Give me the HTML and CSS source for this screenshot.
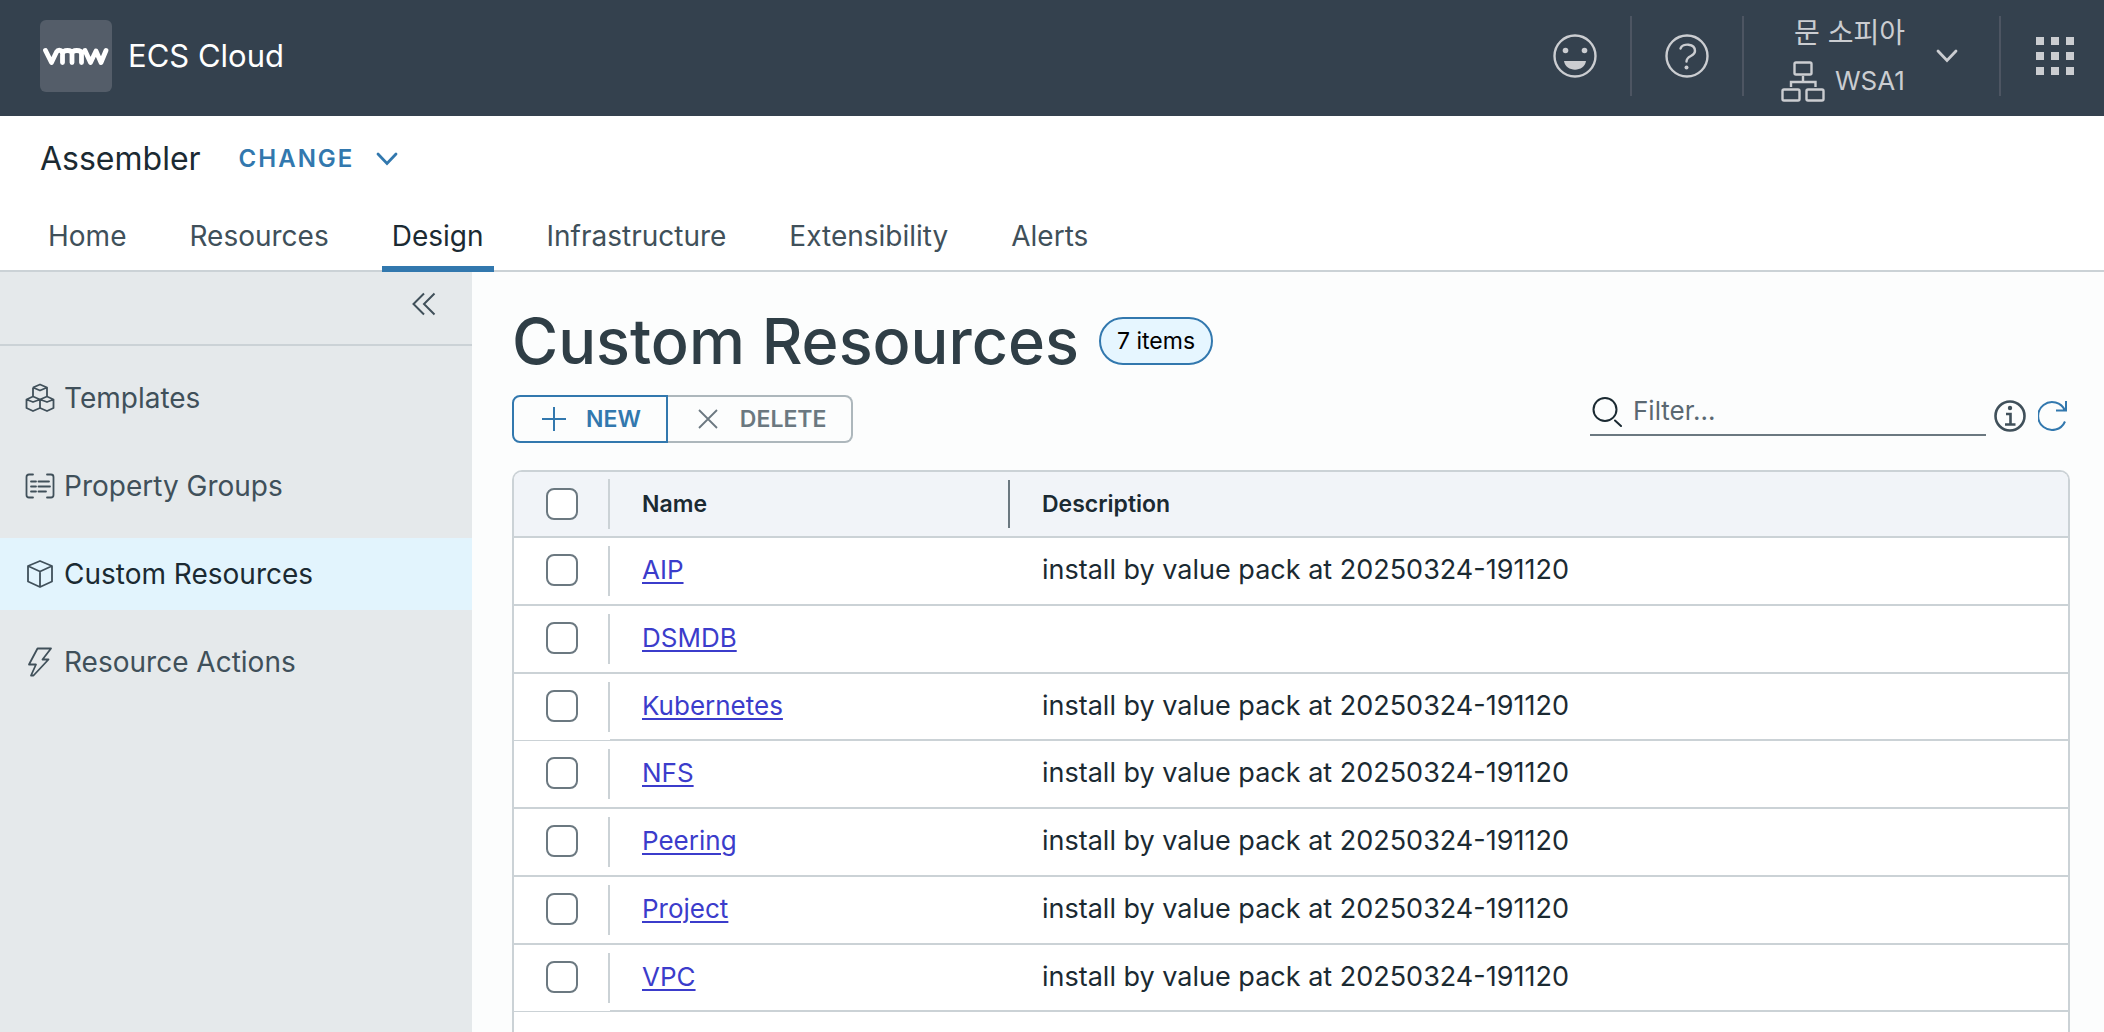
FILE: index.html
```html
<!DOCTYPE html>
<html lang="en">
<head>
<meta charset="utf-8">
<title>Custom Resources</title>
<meta name="viewport" content="width=device-width, initial-scale=1">
<link rel="stylesheet" href="styles.css">
</head>
<body>
<header class="topbar">
  <a class="brand" href="#">
    <span class="brand-logo">
      <svg width="72" height="72" viewBox="0 0 72 72" fill="none" stroke="#fff" stroke-width="4.800" stroke-linecap="round" stroke-linejoin="round" aria-hidden="true">
        <path d="M5.500 30.500 L11.500 42.500 L16.500 32 C18 29.500 22 29.500 22.500 33.500 V42.500 M22.500 33.500 C23.500 29.500 31.500 29.500 32 33.500 V42.500 M32 33.500 C32.500 29.500 41 29.500 41.500 33.500 V42.500 M45 30.500 L50.500 42.500 L56 31 L61 42.500 L66 30.500"/>
      </svg>
    </span>
    <span class="brand-name">ECS Cloud</span>
  </a>
  <div class="topbar-actions">
    <button class="icon-button" type="button" aria-label="Feedback">
      <svg width="44" height="44" viewBox="0 0 44 44" fill="none" stroke="currentColor" stroke-width="2.400" aria-hidden="true">
        <circle cx="22" cy="22" r="20.500"/>
        <circle cx="12.500" cy="16.500" r="2.800" fill="currentColor" stroke="none"/>
        <circle cx="31.500" cy="16.500" r="2.800" fill="currentColor" stroke="none"/>
        <path d="M11 27 H33 C31.500 38.500 12.500 38.500 11 27Z" fill="currentColor" stroke="none"/>
      </svg>
    </button>
    <button class="icon-button" type="button" aria-label="Help">
      <svg width="44" height="44" viewBox="0 0 44 44" fill="none" stroke="currentColor" stroke-width="2.400" stroke-linecap="round" aria-hidden="true">
        <circle cx="22" cy="22" r="20.500"/>
        <path d="M15.500 14.500 C17.500 9 30 9 30 17 C30 23 21.500 21 21.500 27.500"/>
        <circle cx="21.500" cy="33.500" r="2" fill="currentColor" stroke="none"/>
      </svg>
    </button>
    <button class="account" type="button">
      <span class="account-text">
        <span class="account-user" lang="ko">문 소피아</span>
        <span class="account-org">
          <svg width="44" height="44" viewBox="0 0 44 44" fill="none" stroke="currentColor" stroke-width="2.400" aria-hidden="true">
            <rect x="13.500" y="3.500" width="17" height="12" rx="1.500"/>
            <rect x="1.500" y="30.500" width="17" height="11" rx="1.500"/>
            <rect x="25.500" y="30.500" width="17" height="11" rx="1.500"/>
            <path d="M22 17 V23 M10 28 V23 H34.500 V28"/>
          </svg>
          WSA1
        </span>
      </span>
      <svg width="22" height="14" viewBox="0 0 22 14" fill="none" stroke="currentColor" stroke-width="2.800" stroke-linecap="round" aria-hidden="true"><path d="M2 2 L11 11.500 L20 2"/></svg>
    </button>
    <button class="icon-button launcher" type="button" aria-label="Services">
      <svg width="38" height="38" viewBox="0 0 38 38" fill="currentColor" aria-hidden="true">
        <path d="M0 0h8v8H0zM15 0h8v8h-8zM30 0h8v8h-8zM0 15h8v8H0zM15 15h8v8h-8zM30 15h8v8h-8zM0 30h8v8H0zM15 30h8v8h-8zM30 30h8v8h-8z"/>
      </svg>
    </button>
  </div>
</header>

<div class="subheader">
  <div class="service">
    <span class="service-name">Assembler</span>
    <button class="service-change" type="button">CHANGE
      <svg width="22" height="14" viewBox="0 0 22 14" fill="none" stroke="currentColor" stroke-width="2.800" stroke-linecap="round" aria-hidden="true"><path d="M2 2 L11 11.500 L20 2"/></svg>
    </button>
  </div>
  <nav class="tabs" aria-label="Sections">
    <a class="tab" href="#">Home</a>
    <a class="tab" href="#">Resources</a>
    <a class="tab tab-active" href="#" aria-current="page">Design</a>
    <a class="tab" href="#">Infrastructure</a>
    <a class="tab" href="#">Extensibility</a>
    <a class="tab" href="#">Alerts</a>
  </nav>
</div>

<div class="workspace">
  <aside class="sidebar">
    <div class="sidebar-top">
      <button class="collapse" type="button" aria-label="Collapse navigation">
        <svg width="24" height="24" viewBox="0 0 24 24" fill="none" stroke="currentColor" stroke-width="2" aria-hidden="true"><path d="M12 1.500 L1.500 12 L12 22.500 M22.500 1.500 L12 12 L22.500 22.500"/></svg>
      </button>
    </div>
    <nav class="side-nav" aria-label="Design">
      <a class="side-link" href="#">
        <svg width="32" height="32" viewBox="0 0 32 32" fill="none" stroke="currentColor" stroke-width="1.800" stroke-linejoin="round" aria-hidden="true">
          <path d="M9 5.500 L16 2.500 L23 5.500 V15 M9 5.500 V15 M9 5.500 L16 8.500 L23 5.500 M2.500 17.500 L9 14.500 L16 17.500 L23 14.500 L29.500 17.500 V26 L23 29 L16 26 L9 29 L2.500 26 Z M16 17.500 V26 M2.500 17.500 L9 20 L16 17.500 L23 20 L29.500 17.500"/>
        </svg>
        Templates
      </a>
      <a class="side-link" href="#">
        <svg width="32" height="32" viewBox="0 0 32 32" fill="none" stroke="currentColor" stroke-width="1.800" stroke-linecap="round" aria-hidden="true">
          <path d="M9 4.500 H5 Q2.500 4.500 2.500 7 V25 Q2.500 27.500 5 27.500 H9 M23 4.500 H27 Q29.500 4.500 29.500 7 V25 Q29.500 27.500 27 27.500 H23 M7 11.500 H12 M14.500 11.500 H25 M7 16.500 H12 M14.500 16.500 H26 M7 21.500 H12 M14.500 21.500 H22"/>
        </svg>
        Property Groups
      </a>
      <a class="side-link side-link-active" href="#" aria-current="page">
        <svg width="32" height="32" viewBox="0 0 32 32" fill="none" stroke="currentColor" stroke-width="1.800" stroke-linejoin="round" aria-hidden="true">
          <path d="M16 3 L28 8 V23.500 L16 29 L4 23.500 V8 Z M4 8 L16 13.500 L28 8 M16 13.500 V29"/>
        </svg>
        Custom Resources
      </a>
      <a class="side-link" href="#">
        <svg width="32" height="32" viewBox="0 0 32 32" fill="none" stroke="currentColor" stroke-width="1.800" stroke-linejoin="round" aria-hidden="true">
          <path d="M13.500 2.500 H27 L18.500 13.500 H24.500 L9.500 29.500 H7 L12 18.500 H5 Z"/>
        </svg>
        Resource Actions
      </a>
    </nav>
  </aside>

  <main class="content">
    <div class="title-row">
      <h1 class="title">Custom Resources</h1>
      <span class="badge">7 items</span>
    </div>
    <div class="toolbar">
      <div class="button-group">
        <button class="button button-new" type="button">
          <svg width="24" height="24" viewBox="0 0 24 24" fill="none" stroke="currentColor" stroke-width="2" aria-hidden="true"><path d="M12 0 V24 M0 12 H24"/></svg>
          NEW
        </button>
        <button class="button button-delete" type="button" disabled>
          <svg width="20" height="20" viewBox="0 0 20 20" fill="none" stroke="currentColor" stroke-width="1.800" aria-hidden="true"><path d="M1 1 L19 19 M19 1 L1 19"/></svg>
          DELETE
        </button>
      </div>
      <div class="filter-tools">
        <label class="filter">
          <svg width="32" height="32" viewBox="0 0 32 32" fill="none" stroke="currentColor" stroke-width="2" stroke-linecap="round" aria-hidden="true"><circle cx="15" cy="14.500" r="11.500"/><path d="M25 25.500 L31 31"/></svg>
          <input class="filter-input" type="text" placeholder="Filter..." aria-label="Filter">
        </label>
        <button class="tool info" type="button" aria-label="Filter help">
          <svg width="32" height="32" viewBox="0 0 32 32" fill="none" stroke="currentColor" stroke-width="2.600" aria-hidden="true"><circle cx="16" cy="16" r="14.500"/><circle cx="16" cy="8" r="2.200" fill="currentColor" stroke="none"/><path d="M12 14 H16.500 V24.500 M11 24.500 H21.500"/></svg>
        </button>
        <button class="tool refresh" type="button" aria-label="Refresh">
          <svg width="32" height="32" viewBox="0 0 32 32" fill="none" stroke="currentColor" stroke-width="2" aria-hidden="true"><path d="M27 21.500 A14 14 0 1 1 27 10.500 M18 10.500 H28 V1"/></svg>
        </button>
      </div>
    </div>

    <div class="grid">
      <table class="table">
        <thead>
          <tr>
            <th class="cell-select" scope="col"><input class="check" type="checkbox" aria-label="Select all"></th>
            <th class="cell-name" scope="col">Name</th>
            <th class="cell-desc" scope="col">Description</th>
          </tr>
        </thead>
        <tbody>
          <tr><td class="cell-select"><input class="check" type="checkbox" aria-label="Select AIP"></td><td class="cell-name"><a href="#">AIP</a></td><td class="cell-desc">install by value pack at 20250324-191120</td></tr>
          <tr><td class="cell-select"><input class="check" type="checkbox" aria-label="Select DSMDB"></td><td class="cell-name"><a href="#">DSMDB</a></td><td class="cell-desc"></td></tr>
          <tr><td class="cell-select"><input class="check" type="checkbox" aria-label="Select Kubernetes"></td><td class="cell-name"><a href="#">Kubernetes</a></td><td class="cell-desc">install by value pack at 20250324-191120</td></tr>
          <tr><td class="cell-select"><input class="check" type="checkbox" aria-label="Select NFS"></td><td class="cell-name"><a href="#">NFS</a></td><td class="cell-desc">install by value pack at 20250324-191120</td></tr>
          <tr><td class="cell-select"><input class="check" type="checkbox" aria-label="Select Peering"></td><td class="cell-name"><a href="#">Peering</a></td><td class="cell-desc">install by value pack at 20250324-191120</td></tr>
          <tr><td class="cell-select"><input class="check" type="checkbox" aria-label="Select Project"></td><td class="cell-name"><a href="#">Project</a></td><td class="cell-desc">install by value pack at 20250324-191120</td></tr>
          <tr><td class="cell-select"><input class="check" type="checkbox" aria-label="Select VPC"></td><td class="cell-name"><a href="#">VPC</a></td><td class="cell-desc">install by value pack at 20250324-191120</td></tr>
        </tbody>
      </table>
    </div>
  </main>
</div>
</body>
</html>
```
FILE: styles.css
```css
:root {
  --line: #cbd2d6;
  --blue: #3278ae;
  --ink: #1b2a32;
  --text: #40505a;
  --muted: #6b7880;
}

* { box-sizing: border-box; }

body {
  margin: 0;
  height: 100vh;
  display: flex;
  flex-direction: column;
  overflow: hidden;
  background: #fcfdfd;
  color: var(--ink);
  font-family: Inter, "Noto Sans CJK KR", sans-serif;
  font-size: 26px;
  line-height: 36px;
}

a { color: inherit; text-decoration: none; }
svg { display: block; flex: none; }

button {
  margin: 0;
  padding: 0;
  border: 0;
  background: none;
  color: inherit;
  font: inherit;
}

.topbar {
  flex: none;
  height: 116px;
  padding: 0 0 4px 40px;
  display: flex;
  align-items: center;
  justify-content: space-between;
  background: #34414e;
  color: #cbcdd1;
}

.brand { display: flex; align-items: center; gap: 16px; color: #fff; }
.brand-logo { border-radius: 6px; background: #545d69; }
.brand-name { font-size: 31px; }

.topbar-actions { display: flex; height: 80px; }

.icon-button {
  width: 112px;
  display: flex;
  align-items: center;
  justify-content: center;
  border-right: 2px solid #4d5562;
}

.launcher { width: 103px; padding-left: 4px; border-right: 0; }

.account {
  width: 257px;
  padding: 0 41px 0 37px;
  display: flex;
  align-items: center;
  justify-content: space-between;
  border-right: 2px solid #4d5562;
  text-align: right;
}

.account-text { align-self: flex-start; }
.account-user { display: block; font-size: 28px; line-height: 34px; }
.account-org { display: flex; align-items: center; gap: 10px; height: 62px; }

.subheader {
  flex: none;
  background: #fff;
  border-bottom: 2px solid var(--line);
}

.service { display: flex; align-items: center; height: 84px; padding-top: 2px; padding-left: 40px; gap: 38px; }
.service-name { font-size: 32px; }

.service-change {
  display: flex;
  align-items: center;
  gap: 22px;
  color: var(--blue);
  font-size: 24px;
  font-weight: 600;
  letter-spacing: 2px;
}

.tabs { display: flex; gap: 43px; padding-left: 38px; margin-bottom: -2px; }

.tab {
  height: 72px;
  padding: 18px 10px 12px;
  border-bottom: 6px solid transparent;
  color: var(--text);
  font-size: 28px;
}

.tab-active { border-color: var(--blue); color: var(--ink); }

.workspace { flex: 1; min-height: 0; display: flex; }

.sidebar { flex: none; width: 472px; background: #e5e9eb; color: var(--text); }

.sidebar-top {
  height: 74px;
  padding: 20px 36px;
  display: flex;
  justify-content: flex-end;
  align-items: flex-start;
  border-bottom: 2px solid var(--line);
}

.side-nav { display: flex; flex-direction: column; gap: 16px; padding-top: 16px; }

.side-link {
  display: flex;
  align-items: center;
  gap: 8px;
  height: 72px;
  padding-left: 24px;
  font-size: 28px;
}

.side-link-active { background: #e2f4fd; color: var(--ink); }
.side-link-active svg { color: var(--text); }

.content { flex: 1; min-width: 0; display: flex; flex-direction: column; padding: 33px 34px 0 40px; }

.title-row { display: flex; align-items: center; gap: 20px; height: 72px; }

.title { margin: 0; color: #2f3e46; font-size: 63px; font-weight: 500; line-height: 72px; }

.badge {
  height: 48px;
  padding: 0 16px;
  border: 2px solid var(--blue);
  border-radius: 24px;
  background: #e6f6ff;
  color: #000;
  font-size: 23px;
  line-height: 44px;
}

.toolbar { display: flex; justify-content: space-between; height: 67px; margin-top: 18px; margin-bottom: 8px; }

.button-group { display: flex; height: 48px; }

.button {
  display: flex;
  align-items: center;
  border: 2px solid;
  font-size: 23px;
  font-weight: 600;
}

.button-new { gap: 20px; padding: 0 25px 0 28px; border-radius: 8px 0 0 8px; color: var(--blue); }

.button-delete {
  gap: 22px;
  padding: 0 25px 0 30px;
  border-color: #adb7bc;
  border-left: 0;
  border-radius: 0 8px 8px 0;
  color: var(--muted);
}

.filter-tools { display: flex; align-items: flex-start; }

.filter {
  display: flex;
  align-items: center;
  gap: 11px;
  width: 396px;
  height: 41px;
  margin-right: 8px;
  padding-bottom: 7px;
  border-bottom: 2px solid var(--muted);
}

.filter-input {
  flex: 1;
  min-width: 0;
  padding: 0;
  border: 0;
  outline: 0;
  background: none;
  color: var(--ink);
  font: inherit;
}

.filter-input::placeholder { color: #5a6872; opacity: 1; }

.tool { padding-top: 5px; color: var(--text); }
.info { margin-right: 12px; }
.refresh { color: var(--blue); }

.grid {
  flex: 1;
  min-height: 0;
  border: 2px solid var(--line);
  border-bottom: 0;
  border-radius: 10px 10px 0 0;
  background: #fff;
  overflow: hidden;
}

.table { width: 100%; border-collapse: separate; border-spacing: 0; table-layout: fixed; }

.table th,
.table td { height: 68px; padding: 0 32px 2px; border-bottom: 2px solid var(--line); text-align: left; }

.table th { height: 66px; padding-bottom: 0; background: #f1f4f8; font-size: 23px; font-weight: 600; }

.table tr:nth-child(4n + 3) td { height: 67px; }
.table tr:nth-child(4n + 3) .cell-select { border-bottom-width: 1px; }

.table .cell-select {
  width: 96px;
  padding-right: 0;
  background-image: linear-gradient(var(--line), var(--line));
  background-repeat: no-repeat;
  background-position: right center;
  background-size: 2px 50px;
}

.table .cell-name { width: 400px; }
.table td.cell-desc { font-size: 27px; }

.table th.cell-name {
  background-image: linear-gradient(var(--muted), var(--muted));
  background-repeat: no-repeat;
  background-position: right center;
  background-size: 2px 48px;
}

.cell-name a { color: #3b3ccb; text-decoration: underline; text-decoration-thickness: 2px; text-underline-offset: 3px; }

.check {
  display: block;
  width: 32px;
  height: 32px;
  margin: 0;
  appearance: none;
  border: 2px solid var(--muted);
  border-radius: 8px;
  background: #fff;
}
```
